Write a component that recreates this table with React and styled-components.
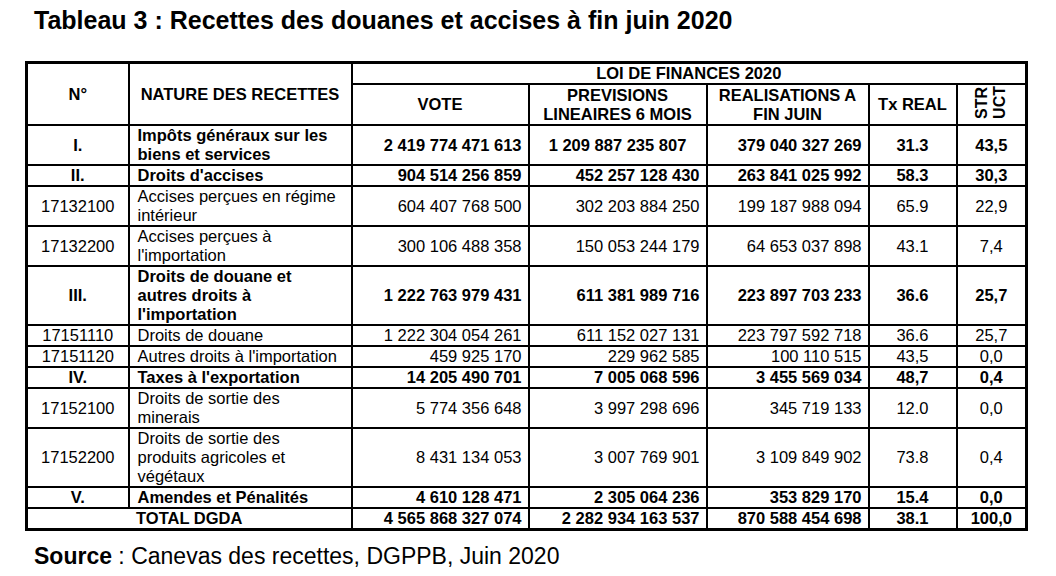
import React from "react";
import styled, { createGlobalStyle, css } from "styled-components";

const GlobalStyle = createGlobalStyle`
  html, body { margin: 0; padding: 0; background: #fff; }
  body { font-family: "Liberation Sans", Arial, sans-serif; color: #000; }
`;

const Page = styled.div`
  width: 1056px;
  height: 576px;
  box-sizing: border-box;
  padding: 6px 0 0 25px;
  display: flex;
  flex-direction: column;
  align-items: flex-start;
`;

const Title = styled.h1`
  margin: 0 0 27px 9px;
  font-size: 25px;
  line-height: 28px;
  font-weight: 700;
`;

const Table = styled.table`
  border-collapse: collapse;
  table-layout: fixed;
  width: 1000px;
  border: 3px solid #000;
  font-size: 16.5px;
  line-height: 19px;
`;

const Th = styled.th`
  border: 2px solid #000;
  padding: 0 3px;
  font-weight: 700;
  text-align: center;
  vertical-align: middle;
  white-space: nowrap;
  height: ${(p) => p.$h || "auto"};
`;

const Vertical = styled.div`
  display: inline-block;
  writing-mode: vertical-rl;
  transform: rotate(180deg);
  font-size: 16px;
  line-height: 18px;
  text-align: left;
`;

const Td = styled.td`
  border-left: 2px solid #000;
  border-right: 2px solid #000;
  border-top: 2px solid #000;
  border-bottom: ${(p) => (p.$thin ? "1px solid #444" : "2px solid #000")};
  padding: 0 6px;
  vertical-align: middle;
  white-space: nowrap;
  font-weight: ${(p) => (p.$bold ? 700 : 400)};
  text-align: ${(p) => p.$align || "left"};
  ${(p) =>
    p.$thinTop &&
    css`
      border-top: 1px solid #444;
    `}
`;

const NatureCell = styled(Td)`
  padding-left: 8px;
`;

const Source = styled.p`
  margin: 12px 0 0 9px;
  font-size: 23px;
  line-height: 26px;
`;

const SourceLabel = styled.b`
  font-weight: 700;
`;

const rows = [
  { no: "I.", nature: ["Impôts généraux sur les", "biens et services"], vote: "2 419 774 471 613", prev: "1 209 887 235 807", real: "379 040 327 269", tx: "31.3", str: "43,5", bold: true, prevCenter: true },
  { no: "II.", nature: ["Droits d'accises"], vote: "904 514 256 859", prev: "452 257 128 430", real: "263 841 025 992", tx: "58.3", str: "30,3", bold: true },
  { no: "17132100", nature: ["Accises perçues en régime", "intérieur"], vote: "604 407 768 500", prev: "302 203 884 250", real: "199 187 988 094", tx: "65.9", str: "22,9", thin: true },
  { no: "17132200", nature: ["Accises perçues à", "l'importation"], vote: "300 106 488 358", prev: "150 053 244 179", real: "64 653 037 898", tx: "43.1", str: "7,4" },
  { no: "III.", nature: ["Droits de douane et", "autres droits à", "l'importation"], vote: "1 222 763 979 431", prev: "611 381 989 716", real: "223 897 703 233", tx: "36.6", str: "25,7", bold: true },
  { no: "17151110", nature: ["Droits de douane"], vote: "1 222 304 054 261", prev: "611 152 027 131", real: "223 797 592 718", tx: "36.6", str: "25,7", thin: true },
  { no: "17151120", nature: ["Autres droits à l'importation"], vote: "459 925 170", prev: "229 962 585", real: "100 110 515", tx: "43,5", str: "0,0" },
  { no: "IV.", nature: ["Taxes à l'exportation"], vote: "14 205 490 701", prev: "7 005 068 596", real: "3 455 569 034", tx: "48,7", str: "0,4", bold: true },
  { no: "17152100", nature: ["Droits de sortie des", "minerais"], vote: "5 774 356 648", prev: "3 997 298 696", real: "345 719 133", tx: "12.0", str: "0,0", thin: true },
  { no: "17152200", nature: ["Droits de sortie des", "produits agricoles et", "végétaux"], vote: "8 431 134 053", prev: "3 007 769 901", real: "3 109 849 902", tx: "73.8", str: "0,4" },
  { no: "V.", nature: ["Amendes et Pénalités"], vote: "4 610 128 471", prev: "2 305 064 236", real: "353 829 170", tx: "15.4", str: "0,0", bold: true },
];

const nb = (s) => s.replace(/ /g, "\u00a0");

function Lines({ lines }) {
  return lines.map((l, i) => (
    <React.Fragment key={i}>
      {i > 0 && <br />}
      {l}
    </React.Fragment>
  ));
}

export default function App() {
  return (
    <>
      <GlobalStyle />
      <Page>
        <Title>Tableau 3 : Recettes des douanes et accises à fin juin 2020</Title>
        <Table>
          <colgroup>
            <col style={{ width: 102 }} />
            <col style={{ width: 223 }} />
            <col style={{ width: 177 }} />
            <col style={{ width: 178 }} />
            <col style={{ width: 162 }} />
            <col style={{ width: 88 }} />
            <col style={{ width: 70 }} />
          </colgroup>
          <thead>
            <tr>
              <Th rowSpan={2}>N°</Th>
              <Th rowSpan={2}>NATURE DES RECETTES</Th>
              <Th colSpan={5} $h="19px">LOI DE FINANCES 2020</Th>
            </tr>
            <tr>
              <Th $h="39px">VOTE</Th>
              <Th>
                PREVISIONS
                <br />
                LINEAIRES 6 MOIS
              </Th>
              <Th>
                REALISATIONS A
                <br />
                FIN JUIN
              </Th>
              <Th>Tx REAL</Th>
              <Th>
                <Vertical>
                  STR
                  <br />
                  UCT
                </Vertical>
              </Th>
            </tr>
          </thead>
          <tbody>
            {rows.map((r) => (
              <tr key={r.no}>
                <Td $bold={r.bold} $thin={r.thin} $align="center">{r.no}</Td>
                <NatureCell $bold={r.bold} $thin={r.thin}>
                  <Lines lines={r.nature} />
                </NatureCell>
                <Td $bold={r.bold} $thin={r.thin} $align="right">{nb(r.vote)}</Td>
                <Td $bold={r.bold} $thin={r.thin} $align={r.prevCenter ? "center" : "right"}>{nb(r.prev)}</Td>
                <Td $bold={r.bold} $thin={r.thin} $align="right">{nb(r.real)}</Td>
                <Td $bold={r.bold} $thin={r.thin} $align="center">{r.tx}</Td>
                <Td $bold={r.bold} $thin={r.thin} $align="center">{r.str}</Td>
              </tr>
            ))}
            <tr>
              <Td colSpan={2} $bold $align="center">TOTAL DGDA</Td>
              <Td $bold $align="right">{nb("4 565 868 327 074")}</Td>
              <Td $bold $align="right">{nb("2 282 934 163 537")}</Td>
              <Td $bold $align="right">{nb("870 588 454 698")}</Td>
              <Td $bold $align="center">38.1</Td>
              <Td $bold $align="center">100,0</Td>
            </tr>
          </tbody>
        </Table>
        <Source>
          <SourceLabel>Source</SourceLabel> : Canevas des recettes, DGPPB, Juin 2020
        </Source>
      </Page>
    </>
  );
}
